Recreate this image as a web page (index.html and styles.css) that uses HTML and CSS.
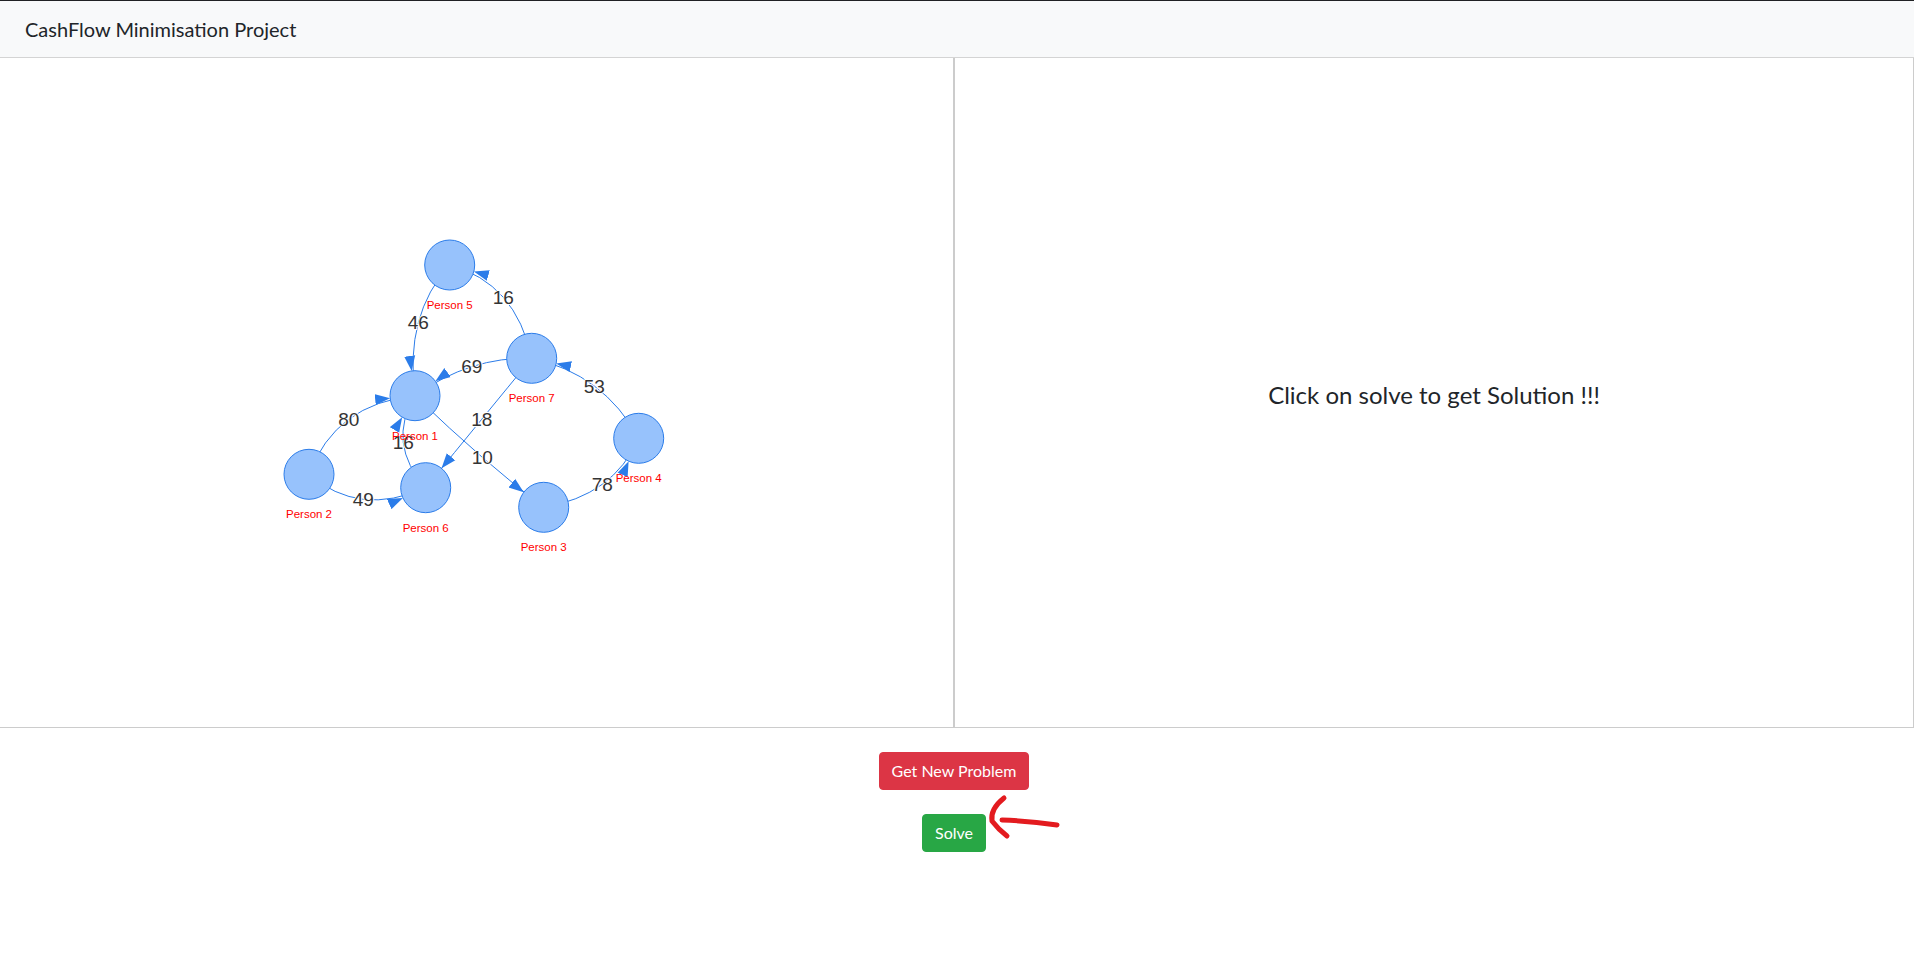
FILE: index.html
```html
<!DOCTYPE html>
<html lang="en">
<head>
<meta charset="utf-8">
<title>CashFlow Minimisation Project</title>
<link rel="stylesheet" href="styles.css">
</head>
<body>
<div class="page">
  <nav class="navbar">
    <span class="brand">CashFlow Minimisation Project</span>
  </nav>
  <main class="panels">
    <section class="panel panel-left">
      <svg class="graph" width="954" height="669" viewBox="0 58 954 669" xmlns="http://www.w3.org/2000/svg">
        <defs>
          <marker id="arrow" markerUnits="userSpaceOnUse" viewBox="0 0 40 12" markerWidth="40" markerHeight="12" refX="40" refY="6" orient="auto">
            <path d="M0,0.5 L15,6 L0,11.5 Z" fill="#2b7ce9"/>
          </marker>
        </defs>
        <g class="edges">
          <path d="M531.7,358.3 Q515.9,282.95 449.7,265"/>
          <path d="M449.7,265 Q404.25,315.05 415,395.7"/>
          <path d="M531.7,358.3 Q470.05,356.4 415,395.7"/>
          <path d="M638.7,438.3 Q603.4,373.7 531.7,358.3"/>
          <path d="M309,474.3 Q335.4,403.6 415,395.7"/>
          <path d="M531.7,358.3 Q484.7,415.6 425.7,487.7"/>
          <path d="M425.7,487.7 Q386.25,443.7 415,395.7"/>
          <path d="M415,395.7 Q485.25,463.1 543.7,507.3"/>
          <path d="M309,474.3 Q359.25,517.6 425.7,487.7"/>
          <path d="M543.7,507.3 Q613.4,495.8 638.7,438.3"/>
        </g>
        <g class="edge-labels">
          <text x="503.3" y="297.3">16</text>
          <text x="418.3" y="322.7">46</text>
          <text x="471.7" y="366.7">69</text>
          <text x="594.3" y="386">53</text>
          <text x="348.7" y="419.3">80</text>
          <text x="481.7" y="419.3">18</text>
          <text x="403.3" y="442.7">16</text>
          <text x="482.3" y="457.3">10</text>
          <text x="363.3" y="499.3">49</text>
          <text x="602.3" y="484.3">78</text>
        </g>
        <g class="nodes">
          <circle cx="449.7" cy="265" r="25"/>
          <circle cx="531.7" cy="358.3" r="25"/>
          <circle cx="415" cy="395.7" r="25"/>
          <circle cx="638.7" cy="438.3" r="25"/>
          <circle cx="309" cy="474.3" r="25"/>
          <circle cx="425.7" cy="487.7" r="25"/>
          <circle cx="543.7" cy="507.3" r="25"/>
        </g>
        <g class="node-labels">
          <text x="449.7" y="305">Person 5</text>
          <text x="531.7" y="398">Person 7</text>
          <text x="415" y="436">Person 1</text>
          <text x="638.7" y="478">Person 4</text>
          <text x="309" y="514">Person 2</text>
          <text x="425.7" y="528">Person 6</text>
          <text x="543.7" y="547">Person 3</text>
        </g>
      </svg>
    </section>
    <section class="panel panel-right">
      <p class="hint">Click on solve to get Solution !!!</p>
    </section>
  </main>
  <div class="actions">
    <button class="btn btn-danger" type="button">Get New Problem</button>
    <button class="btn btn-success" type="button">Solve</button>
  </div>
  <svg class="scribble" width="90" height="55" viewBox="0 0 90 55" xmlns="http://www.w3.org/2000/svg">
    <path d="M24,7 Q10,18 12,30 Q18,38 27,45"/>
    <path d="M22,29 Q50,30 77,34"/>
  </svg>
</div>
</body>
</html>
```

FILE: styles.css
```css
* {
  box-sizing: border-box;
}

html, body {
  margin: 0;
  padding: 0;
  background: #ffffff;
}

body {
  font-family: "Lato", "Open Sans", "Noto Sans", sans-serif;
  color: #212529;
}

.page {
  position: relative;
  border-top: 1px solid #202124;
  min-height: 953px;
}

.navbar {
  height: 57px;
  background: #f8f9fa;
  border-bottom: 1px solid #d4d4d4;
  display: flex;
  align-items: center;
  padding: 0 25px;
}

.brand {
  font-size: 20px;
  line-height: 30px;
  color: #212529;
}

.panels {
  display: flex;
  height: 670px;
}

.panel {
  border-bottom: 1px solid #cccccc;
}

.panel-left {
  width: 954px;
  border-right: 1px solid #cccccc;
  overflow: hidden;
}

.panel-right {
  flex: 1;
  border-left: 1px solid #cccccc;
  border-right: 1px solid #cccccc;
  display: flex;
  align-items: center;
  justify-content: center;
}

.graph {
  display: block;
}

.edges path {
  fill: none;
  stroke: #2b7ce9;
  stroke-width: 1;
  marker-end: url(#arrow);
}

.edge-labels text {
  font-family: "Liberation Sans", Arial, sans-serif;
  font-size: 19px;
  fill: #343434;
  text-anchor: middle;
  dominant-baseline: central;
  stroke: #ffffff;
  stroke-width: 2px;
  paint-order: stroke;
}

.nodes circle {
  fill: #97c2fc;
  stroke: #2b7ce9;
  stroke-width: 1;
}

.node-labels text {
  font-family: "Liberation Sans", Arial, sans-serif;
  font-size: 11.5px;
  fill: #ff0000;
  text-anchor: middle;
  dominant-baseline: central;
}

.hint {
  margin: 6px 0 0 0;
  font-size: 24px;
  line-height: 1.2;
  color: #212529;
}

.actions {
  display: flex;
  flex-direction: column;
  align-items: center;
  gap: 24px;
  padding-top: 24px;
  padding-right: 6px;
}

.btn {
  font-family: inherit;
  font-size: 16px;
  line-height: 24px;
  padding: 6px 12px;
  border: 1px solid transparent;
  border-radius: 4px;
  color: #ffffff;
  cursor: pointer;
}

.btn-danger {
  background: #dc3545;
  border-color: #dc3545;
}

.btn-success {
  background: #28a745;
  border-color: #28a745;
}

.scribble {
  position: absolute;
  left: 980px;
  top: 790px;
}

.scribble path {
  fill: none;
  stroke: #e31b1f;
  stroke-width: 5;
  stroke-linecap: round;
  stroke-linejoin: round;
}
```
